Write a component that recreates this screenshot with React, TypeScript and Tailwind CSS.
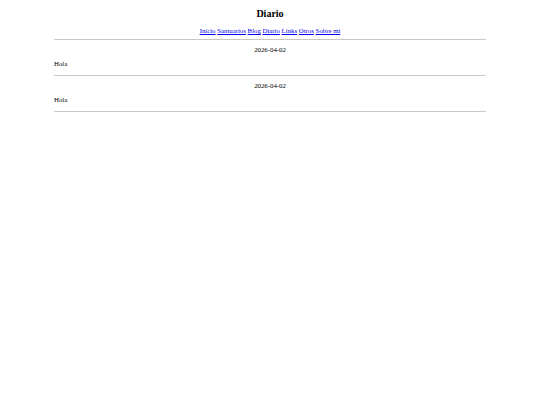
const links = ["Inicio", "Santuarios", "Blog", "Diario", "Links", "Otros", "Sobre mi"];

const entries = [
  { date: "2026-04-02", text: "Hola" },
  { date: "2026-04-02", text: "Hola" },
];

export default function App() {
  return (
    <div className="min-h-screen bg-white text-black font-['Liberation_Serif',serif]">
      <div className="mx-auto w-[432px] pt-[8px]">
        <h1 className="text-center text-[10px] font-bold leading-[12px]">Diario</h1>
        <nav className="mt-[7px] text-center text-[6.8px] leading-[8px]">
          {links.map((l, i) => (
            <span key={l}>
              <a href="#" className="text-[#0000ee] underline">
                {l}
              </a>
              {i < links.length - 1 && " "}
            </span>
          ))}
        </nav>
        <hr className="mt-[4px] border-t border-[#c8c8c8]" />
        {entries.map((e, i) => (
          <div key={i}>
            <p className="mt-[6px] text-center text-[6.8px] leading-[8px]">{e.date}</p>
            <p className="mt-[6px] text-[6.8px] leading-[8px]">{e.text}</p>
            <hr className="mt-[7px] border-t border-[#c8c8c8]" />
          </div>
        ))}
      </div>
    </div>
  );
}
